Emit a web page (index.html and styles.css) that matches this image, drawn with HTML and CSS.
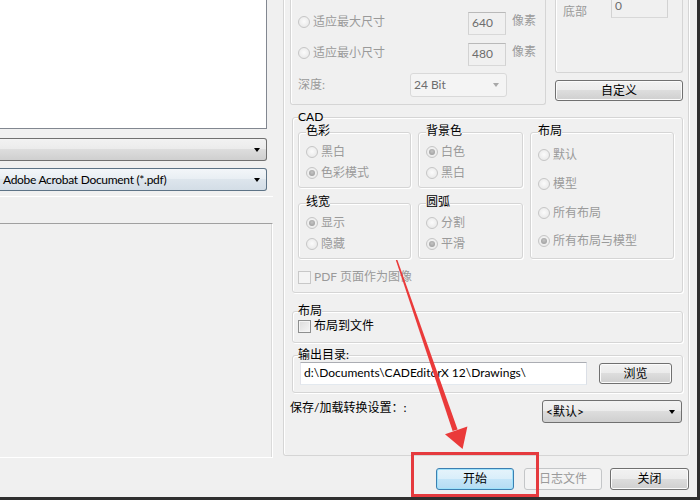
FILE: index.html
```html
<!DOCTYPE html>
<html lang="zh-CN">
<head>
<meta charset="utf-8">
<title>导出</title>
<link rel="stylesheet" href="styles.css">
</head>
<body>
<div class="window">
  <div class="main">
    <div class="left">
      <div class="listbox"></div>
      <div class="combo"><span class="combo-text"></span><i class="arrow"></i></div>
      <div class="combo combo-focus"><span class="combo-text">Adobe Acrobat Document (*.pdf)</span><i class="arrow"></i></div>
      <div class="sep"></div>
      <div class="leftpanel"></div>
    </div>

    <div class="right">
      <div class="top-row">
        <div class="image-group">
          <div class="img-row">
            <div class="rl"><span class="radio"></span><span class="dis">适应最大尺寸</span></div>
            <div class="tb tb-dis">640</div>
            <span class="unit dis">像素</span>
          </div>
          <div class="img-row">
            <div class="rl"><span class="radio"></span><span class="dis">适应最小尺寸</span></div>
            <div class="tb tb-dis">480</div>
            <span class="unit dis">像素</span>
          </div>
          <div class="img-row depth">
            <span class="depth-label dis">深度:</span>
            <div class="select-dis"><span class="combo-text">24 Bit</span><i class="arrow arrow-dis"></i></div>
          </div>
        </div>
        <div class="top-side">
          <div class="margins">
            <span class="bottom-label dis">底部</span>
            <div class="tb tb-dis tb-zero">0</div>
          </div>
          <button class="btn btn-custom">自定义</button>
        </div>
      </div>

      <div class="group cad">
        <div class="legend legend-cad">CAD</div>
        <div class="cad-grid">
          <div class="sub">
            <div class="legend">色彩</div>
            <div class="opt first"><span class="radio"></span><span class="dis">黑白</span></div>
            <div class="opt"><span class="radio on"></span><span class="dis">色彩模式</span></div>
          </div>
          <div class="sub">
            <div class="legend">背景色</div>
            <div class="opt first"><span class="radio on"></span><span class="dis">白色</span></div>
            <div class="opt"><span class="radio"></span><span class="dis">黑白</span></div>
          </div>
          <div class="sub sub-tall">
            <div class="legend">布局</div>
            <div class="opt first"><span class="radio"></span><span class="dis">默认</span></div>
            <div class="opt"><span class="radio"></span><span class="dis">模型</span></div>
            <div class="opt"><span class="radio"></span><span class="dis">所有布局</span></div>
            <div class="opt last"><span class="radio on"></span><span class="dis">所有布局与模型</span></div>
          </div>
          <div class="sub">
            <div class="legend">线宽</div>
            <div class="opt first"><span class="radio on"></span><span class="dis">显示</span></div>
            <div class="opt"><span class="radio"></span><span class="dis">隐藏</span></div>
          </div>
          <div class="sub">
            <div class="legend">圆弧</div>
            <div class="opt first"><span class="radio"></span><span class="dis">分割</span></div>
            <div class="opt"><span class="radio on"></span><span class="dis">平滑</span></div>
          </div>
        </div>
        <div class="check-row pdf-row"><span class="check check-dis"></span><span class="dis">PDF 页面作为图像</span></div>
      </div>

      <div class="group layout-grp">
        <div class="legend legend-cad">布局</div>
        <div class="check-row layout-row"><span class="check"></span><span>布局到文件</span></div>
      </div>

      <div class="group outdir">
        <div class="legend legend-cad">输出目录:</div>
        <div class="out-row">
          <div class="tb tb-path">d:\Documents\CADEditorX 12\Drawings\</div>
          <button class="btn btn-browse">浏览</button>
        </div>
      </div>

      <div class="save-row">
        <span class="save-label">保存/加载转换设置：:</span>
        <div class="combo combo-save"><span class="combo-text">&lt;默认&gt;</span><i class="arrow"></i></div>
      </div>
    </div>
  </div>

  <div class="buttons">
    <button class="btn btn-default">开始</button>
    <button class="btn btn-disabled">日志文件</button>
    <button class="btn btn-close">关闭</button>
  </div>

  <div class="annot-rect"></div>
  <svg class="annot-arrow" width="700" height="500" viewBox="0 0 700 500">
    <polygon points="395.8,260 397.4,260 457.6,429.4 452.6,431" fill="#ea3a3a"/>
    <polygon points="445,434.2 467.4,426.4 462.6,449" fill="#ea3a3a"/>
  </svg>
</div>
</body>
</html>
```

FILE: styles.css
```css
* { box-sizing: border-box; }
html, body { margin: 0; padding: 0; }
body {
  background: #f0f0f0;
  font-family: Lato, "Noto Sans CJK SC", sans-serif;
  font-size: 12px;
  line-height: 16px;
  color: #000;
  width: 700px;
  height: 500px;
  overflow: hidden;
}
.window {
  position: relative;
  width: 700px;
  height: 500px;
  border-right: 3px solid #2f2f2f;
  border-bottom: 3px solid #2f2f2f;
}
.main { display: flex; height: 458px; }

/* left column */
.left { width: 273px; display: flex; flex-direction: column; }
.listbox {
  width: 267px; height: 129px; background: #fff;
  border-right: 1px solid #828790; border-bottom: 1px solid #828790;
}
.combo {
  width: 267px; height: 23px; margin-top: 9px;
  border: 1px solid #707070; border-left: none;
  border-radius: 0 3px 3px 0;
  background: linear-gradient(#f2f2f2, #ebebeb 49%, #dddddd 50%, #cfcfcf);
  display: flex; align-items: center; padding-left: 3px;
}
.combo-focus {
  margin-top: 7px;
  border-color: #5d7386;
  background: linear-gradient(#f3f6f9, #e8eef3 49%, #dde5ec 50%, #d3dde6);
}
.combo-focus .combo-text { letter-spacing: -0.3px; }
.combo-text { flex: 1; white-space: nowrap; }
.arrow {
  width: 0; height: 0;
  border-left: 3.5px solid transparent; border-right: 3.5px solid transparent;
  border-top: 4px solid #000;
  margin-right: 6px;
}
.sep { margin-top: 5px; height: 1px; background: #fff; }
.leftpanel {
  margin-top: 26px; flex: 1;
  border-top: 1px solid #a0a0a0;
  border-right: 1px solid #fff;
  border-bottom: 1px solid #fff;
  box-shadow: inset -1px 0 #dadada;
}

/* right column */
.right {
  margin-left: 10px; width: 406px; height: 456px;
  border: 1px solid #d5d5d5; border-top: none;
  border-radius: 0 0 3px 3px;
  box-shadow: inset 1px 0 #fff, 1px 0 #fff;
  padding-left: 6px; padding-right: 5px;
  display: flex; flex-direction: column;
}
.top-row { display: flex; height: 105px; }
.image-group {
  width: 256px; height: 105px;
  border: 1px solid #d5d5d5; border-top: none;
  border-radius: 0 0 3px 3px;
  box-shadow: inset 1px 0 #fff;
  padding-top: 12px;
}
.img-row { display: flex; align-items: flex-start; height: 23px; }
.img-row + .img-row { margin-top: 8px; }
.rl { width: 177px; display: flex; align-items: center; height: 18px; padding-left: 7px; line-height: 18px; margin-top: 1px; }
.rl .radio { margin-right: 3px; }
.unit { margin-left: 6px; line-height: 16px; margin-top: 1px; }
.img-row.depth { margin-top: 7px; height: 24px; align-items: center; }
.depth-label { width: 119px; padding-left: 7px; }
.dis { color: #9a9a9a; }

.tb {
  height: 23px; padding: 2px 0 0 3px; line-height: 16px;
  border: 1px solid #abadb3;
  border-color: #abadb3 #dbdfe6 #e3e9ef #e2e3ea;
  background: #fff;
  white-space: nowrap; overflow: hidden;
}
.tb-dis {
  width: 38px; background: #f0f0f0; color: #6d6d6d;
  border-color: #b9b9b9 #d2d2d2 #d8d8d8 #d2d2d2;
}
.select-dis {
  width: 97px; height: 24px;
  border: 1px solid #d9d9d9; border-radius: 3px;
  background: #f4f4f4; color: #6d6d6d;
  display: flex; align-items: center; padding-left: 3px;
}
.arrow-dis { border-top-color: #a8a8a8; margin-right: 7px; }

.top-side { margin-left: 9px; width: 128px; }
.margins {
  height: 73px;
  border: 1px solid #d5d5d5; border-top: none;
  border-radius: 0 0 3px 3px;
  box-shadow: inset 1px 0 #fff;
  display: flex; align-items: flex-start;
  padding: 0 14px 0 7px;
}
.bottom-label { margin-top: 5px; line-height: 14px; }
.tb-zero { width: 57px; height: 24px; margin-top: -6px; margin-left: auto; padding-top: 3px; }

.btn {
  font-family: inherit; font-size: 12px; line-height: 16px; color: #000;
  border: 1px solid #707070; border-radius: 3px;
  background: linear-gradient(#f2f2f2, #ebebeb 49%, #dddddd 50%, #cfcfcf);
  box-shadow: inset 0 0 0 1px #fbfbfb;
  padding: 0; margin: 0;
}
.btn-custom { margin-top: 7px; width: 128px; height: 21px; }

/* group boxes */
.group {
  border: 1px solid #d5d5d5; border-radius: 3px;
  box-shadow: inset 1px 1px #fff, 1px 1px #fff;
  margin-left: 2px;
}
.legend {
  width: fit-content; background: #f0f0f0;
  line-height: 14px; margin-top: -8px; margin-left: 7px; padding: 0;
  white-space: nowrap;
}
.legend-cad { margin-left: 5px; }
.cad { margin-top: 12px; height: 176px; }
.cad-grid {
  display: grid;
  grid-template-columns: 113px 105px 144px;
  grid-template-rows: 56px 56px;
  column-gap: 7px; row-gap: 15px;
  margin: 8px 0 0 5px;
}
.sub {
  border: 1px solid #d5d5d5; border-radius: 3px;
  box-shadow: inset 1px 1px #fff, 1px 1px #fff;
}
.sub .legend { margin-top: -9px; }
.sub-tall { grid-row: 1 / span 2; grid-column: 3; }
.opt { display: flex; align-items: center; height: 18px; padding-left: 7px; margin-top: 3px; }
.opt.first { margin-top: 5px; }
.sub-tall .opt { margin-top: 11px; }
.sub-tall .opt.first { margin-top: 8px; }
.sub-tall .opt.last { margin-top: 10px; }
.radio {
  flex: none; position: relative;
  width: 12px; height: 12px; border-radius: 50%;
  border: 1px solid #c6c6c6;
  background: radial-gradient(circle at 50% 45%, #fbfbfb, #e4e4e4);
  margin-right: 3px;
}
.radio.on::after {
  content: ""; position: absolute; left: 2px; top: 2px;
  width: 6px; height: 6px; border-radius: 50%;
  background: radial-gradient(circle at 50% 40%, #c4c4c4, #959595);
}
.check-row { display: flex; align-items: center; height: 18px; }
.check {
  flex: none; width: 13px; height: 13px; margin-right: 3px;
  border: 1px solid #8e8f8f;
  background: linear-gradient(135deg, #dcdcdc, #f6f6f6);
  box-shadow: inset 0 0 0 1px #f4f4f4;
}
.check-dis { border-color: #c8c8c8; background: #f4f4f4; box-shadow: none; }
.pdf-row { margin: 9px 0 0 5px; }

.layout-grp { margin-top: 18px; height: 32px; }
.layout-row { margin: -1px 0 0 5px; }

.outdir { margin-top: 12px; height: 38px; }
.out-row { display: flex; align-items: center; height: 23px; }
.tb-path { width: 287px; margin-left: 7px; }
.btn-browse { width: 73px; height: 21px; margin-left: 12px; }

.save-row { display: flex; align-items: flex-start; margin-top: 7px; }
.save-label { flex: 1; line-height: 16px; }
.combo-save {
  width: 140px; margin: 0 1px 0 0; height: 23px;
  border-left: 1px solid #707070; border-radius: 3px;
}

/* bottom buttons */
.buttons {
  display: flex; justify-content: flex-end;
  margin-top: 10px; padding-right: 8px;
}
.buttons .btn { width: 78px; height: 22px; }
.btn-default {
  border-color: #3c7fb1;
  background: linear-gradient(#e5f3fb, #d9eefa 49%, #c4e5f8 50%, #b5dcf3);
  box-shadow: inset 0 0 0 1px #9ee2fb;
}
.btn-disabled {
  margin-left: 10px;
  border-color: #c4c6c8; background: #f4f4f4; color: #9a9a9a; box-shadow: none;
}
.buttons .btn-close { margin-left: 8px; width: 79px; }

/* annotations */
.annot-rect {
  position: absolute; left: 411px; top: 452px;
  width: 128px; height: 45px;
  border: 3px solid #e53a3e;
}
.annot-arrow { position: absolute; left: 0; top: 0; pointer-events: none; }
```
